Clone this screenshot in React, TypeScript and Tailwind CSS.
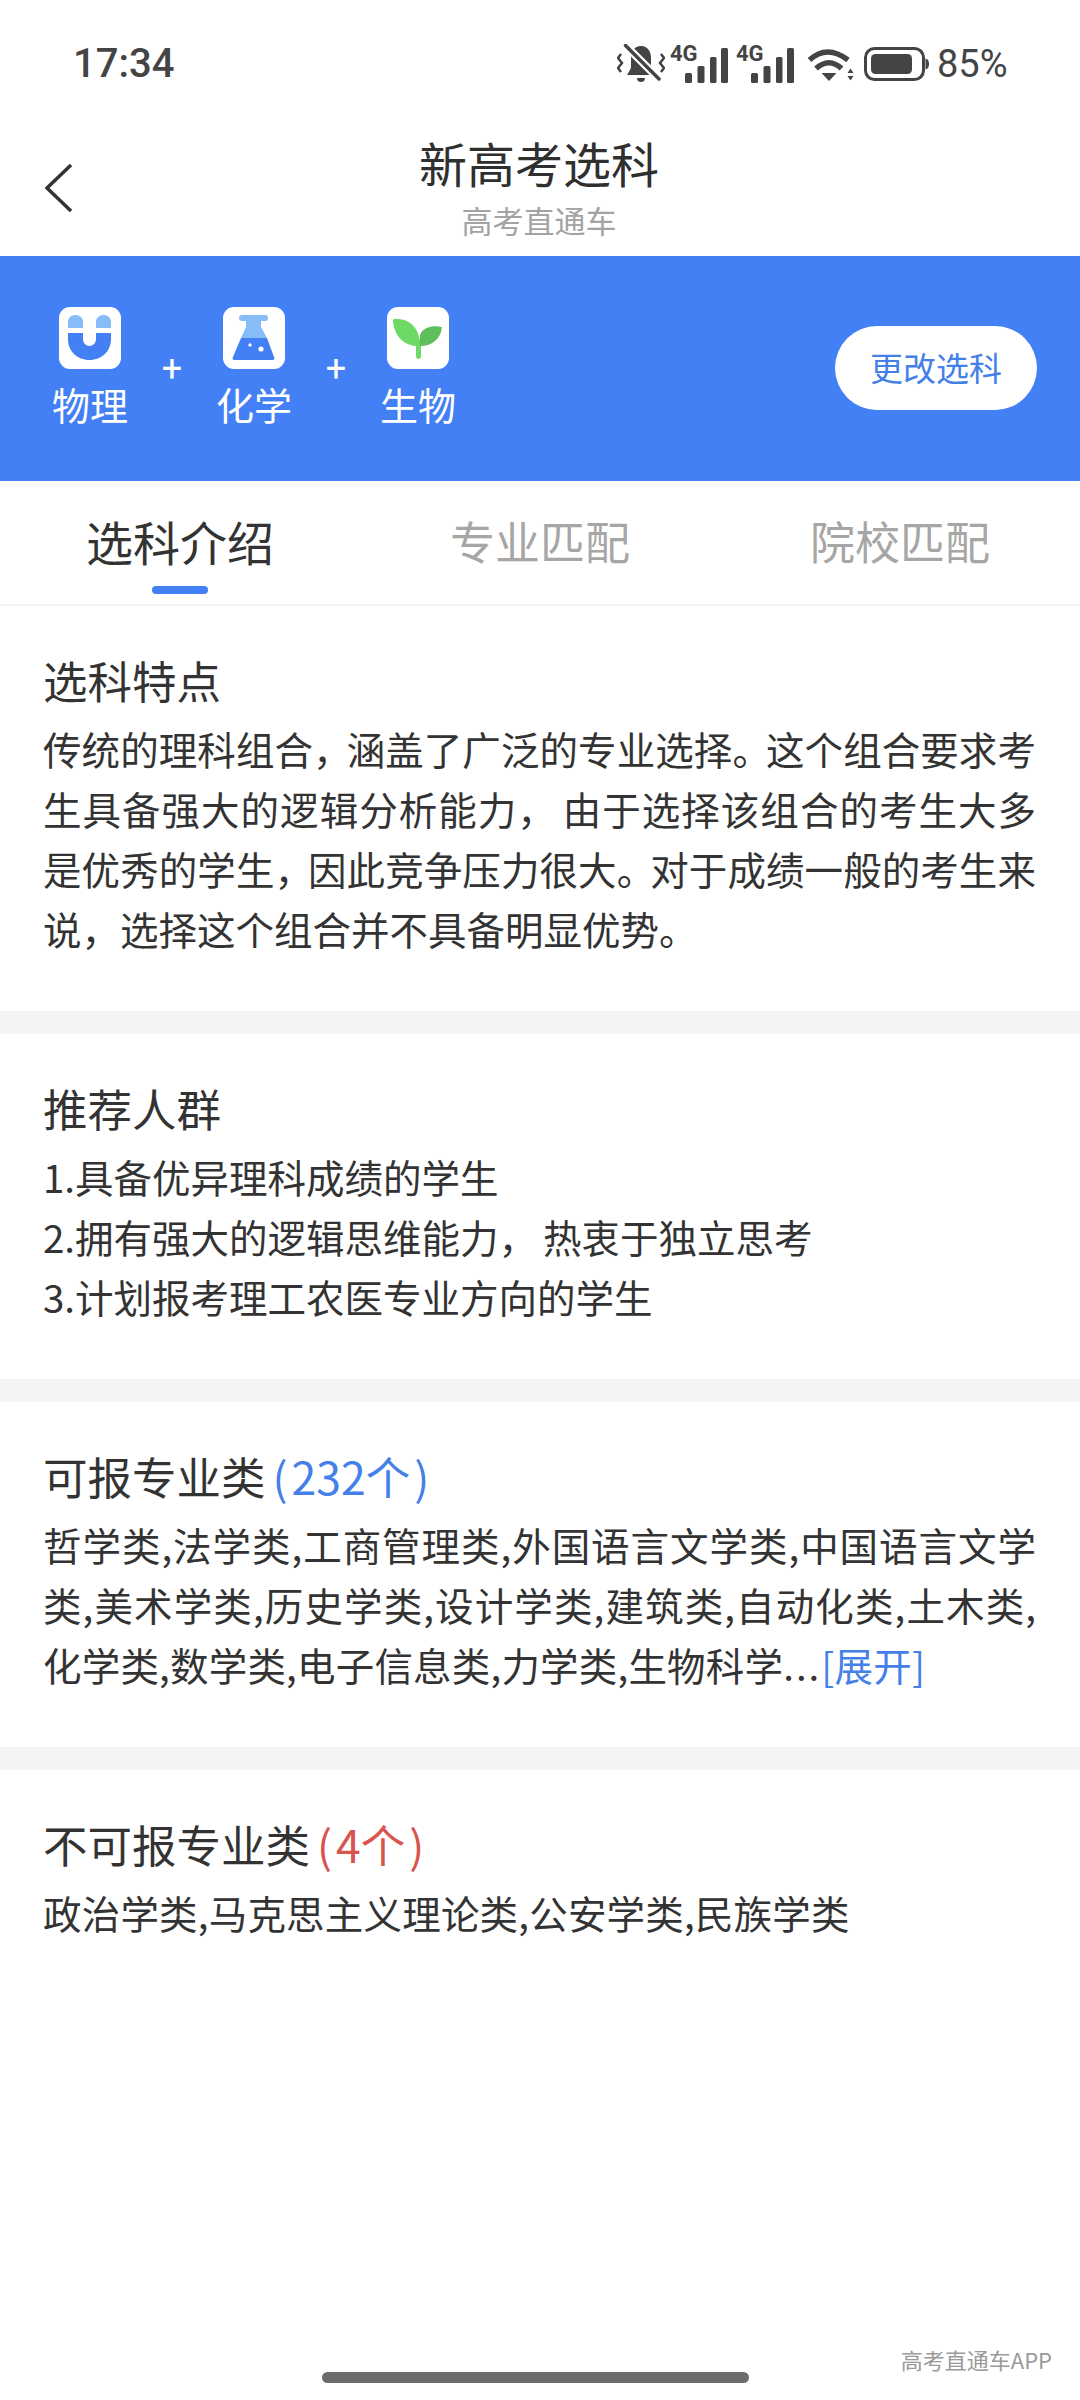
import React from 'react';

const cjk = "font-['Noto_Sans_CJK_SC','Noto_Sans',sans-serif]";

const SignalGroup = () => (
  <div className="relative w-[58px] h-[38px]">
    <span className="absolute left-0 top-[-2px] text-[22px] leading-[22px] font-bold text-[#444] font-['Roboto',sans-serif]">4G</span>
    <svg className="absolute right-0 bottom-0" width="43" height="35" viewBox="0 0 43 35" fill="#444">
      <rect x="0" y="25" width="7" height="10" rx="1.5" />
      <rect x="12.5" y="18" width="7" height="17" rx="1.5" />
      <rect x="25" y="9" width="6.5" height="26" rx="1.5" />
      <rect x="36" y="0" width="7" height="35" rx="1.5" />
    </svg>
  </div>
);

const StatusBar = () => (
  <div className="h-[126px] pt-[2px] flex items-center justify-between pl-[73px] pr-[73px] text-[#444] font-['Roboto',sans-serif]">
    <span className="text-[40px] font-medium leading-none">17:34</span>
    <div className="flex items-center">
      {/* muted bell */}
      <svg width="48" height="40" viewBox="0 0 48 40" className="mr-[5px]">
        <path d="M24 2C31 2 34 8 34 14V24L38 31H10L14 24V14C14 8 17 2 24 2Z" fill="#444" />
        <path d="M20 34H28C28 37 26 38 24 38C22 38 20 37 20 34Z" fill="#444" />
        <path d="M8.5 1.5L42 35" stroke="#fff" strokeWidth="8" />
        <path d="M8.5 1.5L42 35" stroke="#444" strokeWidth="3.5" strokeLinecap="round" />
        <path d="M4 10L1 14L5 19L1 24L4 28" stroke="#444" strokeWidth="2.5" fill="none" />
        <path d="M44 10L47 14L43 19L47 24L44 28" stroke="#444" strokeWidth="2.5" fill="none" />
      </svg>
      <SignalGroup />
      <div className="w-[8px]" />
      <SignalGroup />
      {/* wifi */}
      <svg width="47" height="33" viewBox="0 0 47 33" className="ml-[13px] mr-[10px]">
        <path d="M2.5 12Q20 -4 41 12" stroke="#444" strokeWidth="5.5" fill="none" />
        <path d="M9 20.5Q22 9 34.5 20.5" stroke="#444" strokeWidth="5.5" fill="none" />
        <path d="M14.5 25H29.5L22 33Z" fill="#444" />
        <path d="M43.5 20.5L46.5 25H40.5Z M40.5 28H46.5L43.5 32.5Z" fill="#444" />
      </svg>
      {/* battery */}
      <svg width="65" height="34" viewBox="0 0 65 34" className="mr-[8px]">
        <rect x="1.5" y="1.5" width="58" height="31" rx="9" fill="none" stroke="#444" strokeWidth="3" />
        <rect x="7" y="7" width="41" height="20" rx="4.5" fill="#444" />
        <path d="M61.5 11.5C64 12 65 14 65 17C65 20 64 22 61.5 22.5Z" fill="#444" />
      </svg>
      <span className="text-[38px] leading-none w-[70px]">85%</span>
    </div>
  </div>
);

const Header = () => (
  <div className="h-[130px] flex items-start">
    <div className="w-[100px] pl-[45px] pt-[37px]">
      <svg width="28" height="50" viewBox="0 0 28 50" fill="none">
        <path d="M26 2L2 25L26 48" stroke="#333" strokeWidth="3.5" />
      </svg>
    </div>
    <div className={`flex-1 flex flex-col items-center pt-[6px] ${cjk}`}>
      <div className="text-[48px] leading-[60px] text-[#2f2f2f]">新高考选科</div>
      <div className="text-[31px] leading-[40px] mt-2 text-[#a3a3a3]">高考直通车</div>
    </div>
    <div className="w-[102px]" />
  </div>
);

const Magnet = () => (
  <svg width="62" height="62" viewBox="0 0 62 62">
    <rect width="62" height="62" rx="11" fill="#fff" />
    <path d="M9 21V15C9 11 12 8 16.5 8C21 8 24 11 24 15V21Z M37 21V15C37 11 40 8 44.5 8C49 8 52 11 52 15V21Z" fill="#86bcf7" />
    <path d="M9 26H24V32C24 36 27 39 30.5 39C34 39 37 36 37 32V26H52V32C52 44 43 53 30.5 53C18 53 9 44 9 32Z" fill="#4480f5" />
  </svg>
);

const Flask = () => (
  <svg width="62" height="62" viewBox="0 0 62 62">
    <rect width="62" height="62" rx="11" fill="#fff" />
    <path d="M19 8H43C44.5 8 45 10 45 11C45 13 44 14 43 14H38V20L44 31H18L23 20V14H19C17 14 16 13 16 11C16 9.5 17 8 19 8Z" fill="#86bcf7" />
    <path d="M18 31H44L51 50C52 52 51 53 49 53H12C10 53 9 52 10 50Z" fill="#4480f5" />
    <circle cx="27" cy="38" r="1.7" fill="#fff" />
    <circle cx="38" cy="42" r="2.6" fill="#fff" />
  </svg>
);

const Sprout = () => (
  <svg width="62" height="62" viewBox="0 0 62 62">
    <rect width="62" height="62" rx="11" fill="#fff" />
    <path d="M29 34H34V49C34 51 33 52 31.5 52C30 52 29 51 29 49Z" fill="#6fd966" />
    <path d="M55 20C48 18 36 19 33 28L32 39C44 40 54 32 55 20Z" fill="#5ebf5c" />
    <path d="M6 15C5 12 8 11 10 12C22 12 33 20 33 39C18 40 8 30 6 15Z" fill="#6fd966" />
  </svg>
);

const Subject = ({ icon, label }: { icon: React.ReactNode; label: string }) => (
  <div className="flex flex-col items-center w-[76px]">
    {icon}
    <span className="text-[38px] leading-[50px] mt-[10px] text-white">{label}</span>
  </div>
);

const Plus = () => (
  <span className="w-[88px] text-center text-[36px] leading-none mt-[2px] text-white font-['Roboto',sans-serif]">+</span>
);

const Banner = () => (
  <div className={`h-[225px] pb-[2px] bg-[#4480f5] flex items-center justify-between pl-[52px] pr-[43px] ${cjk}`}>
    <div className="flex items-center">
      <Subject icon={<Magnet />} label="物理" />
      <Plus />
      <Subject icon={<Flask />} label="化学" />
      <Plus />
      <Subject icon={<Sprout />} label="生物" />
    </div>
    <button className="w-[202px] h-[84px] rounded-full bg-white text-[33px] text-[#4480e8]">更改选科</button>
  </div>
);

const tabs = ['选科介绍', '专业匹配', '院校匹配'];

const Tabs = () => (
  <div className={`h-[125px] grid grid-cols-3 border-b-[2px] border-[#f4f4f4] ${cjk}`}>
    {tabs.map((t, i) => (
      <div key={t} className="relative flex justify-center pt-[30px]">
        <span className={`leading-[60px] ${i === 0 ? 'text-[47px] text-[#333]' : 'text-[45px] text-[#a6a6a6]'}`}>{t}</span>
        {i === 0 && <div className="absolute bottom-[10px] left-[152px] w-[56px] h-[8px] rounded-[4px] bg-[#4480f5]" />}
      </div>
    ))}
  </div>
);

const Section = ({ title, children }: { title: React.ReactNode; children: React.ReactNode }) => (
  <section className="pt-[44px] pb-[53px] pl-[43px] pr-[44px]">
    <h2 className="text-[44.5px] leading-[60px] font-normal text-[#333]">{title}</h2>
    <div className="mt-[8px] text-[38.5px] leading-[60px] text-[#333]">{children}</div>
  </section>
);

// full line that reaches the right edge, like the app's justified text
const Line = ({ children }: { children: React.ReactNode }) => (
  <div className="[text-align:justify] [text-align-last:justify]">{children}</div>
);

const Narrow = ({ children }: { children: React.ReactNode }) => (
  <span className="tracking-[-5px]">{children}</span>
);

const Wide = ({ children }: { children: React.ReactNode }) => (
  <span className="tracking-[6px]">{children}</span>
);

const Divider = () => <div className="h-[23px] bg-[#f4f4f4]" />;

export default function App() {
  return (
    <div className={`relative w-[1080px] min-h-[2400px] flex flex-col bg-white ${cjk}`}>
      <StatusBar />
      <Header />
      <Banner />
      <Tabs />
      <Section title="选科特点">
        <Line>传统的理科组合<Narrow>，</Narrow>涵盖了广泛的专业选择<Narrow>。</Narrow>这个组合要求考</Line>
        <Line>生具备强大的逻辑分析能力<Wide>，</Wide>由于选择该组合的考生大多</Line>
        <Line>是优秀的学生<Narrow>，</Narrow>因此竞争压力很大<Narrow>。</Narrow>对于成绩一般的考生来</Line>
        <div>说，选择这个组合并不具备明显优势。</div>
      </Section>
      <Divider />
      <Section title="推荐人群">
        <div>1.具备优异理科成绩的学生</div>
        <div>2.拥有强大的逻辑思维能力<Wide>，</Wide>热衷于独立思考</div>
        <div>3.计划报考理工农医专业方向的学生</div>
      </Section>
      <Divider />
      <Section title={<>可报专业类<span className="ml-[7px] text-[#4480e8]">(<span className="mx-[4px]">232个</span>)</span></>}>
        <Line>哲学类,法学类,工商管理类,外国语言文学类,中国语言文学</Line>
        <Line>类,美术学类,历史学类,设计学类,建筑类,自动化类,土木类,</Line>
        <div className="tracking-[0.2px]">化学类,数学类,电子信息类,力学类,生物科学<span className="tracking-[2px]">...</span><span className="text-[#4480e8]">[展开]</span></div>
      </Section>
      <Divider />
      <Section title={<>不可报专业类<span className="ml-[7px] text-[#d9534f]">(<span className="mx-[4px]">4个</span>)</span></>}>
        <div className="tracking-[0.2px]">政治学类,马克思主义理论类,公安学类,民族学类</div>
      </Section>
      <div className="mt-auto mb-[17px] ml-[322px] w-[427px] h-[11px] rounded-full bg-[#6b6b6b]" />
      <span className="absolute right-[28px] bottom-[30px] text-[22px] leading-[22px] text-[#9a9a9a]">高考直通车APP</span>
    </div>
  );
}
